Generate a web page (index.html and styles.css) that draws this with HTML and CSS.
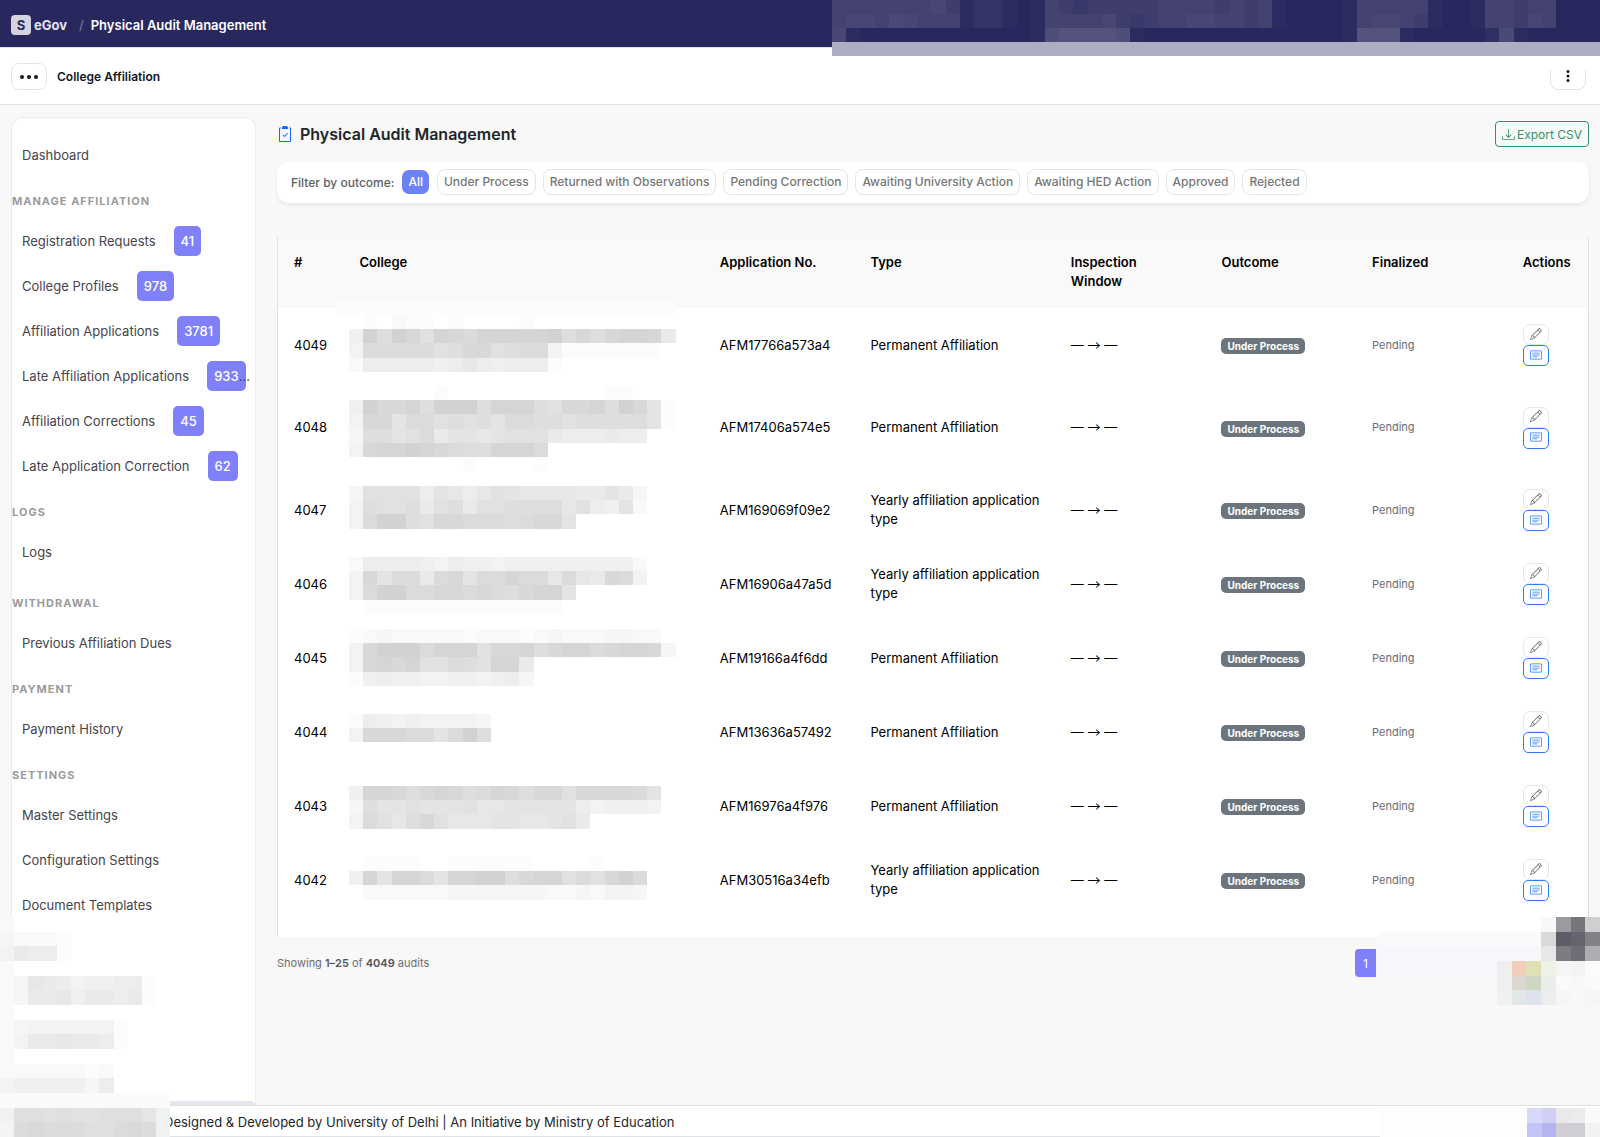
FILE: index.html
```html
<!DOCTYPE html>
<html lang="en">
<head>
    <meta charset="UTF-8">
    <meta name="viewport" content="width=device-width, initial-scale=1.0">
    <title>Physical Audit Management</title>
    <link rel="stylesheet" href="styles.css">
</head>
<body>

<!-- Shared icons -->
<svg class="icon-defs" aria-hidden="true">
    <symbol id="icon-pencil" viewBox="0 0 16 16">
        <path d="M12.146.146a.5.5 0 0 1 .708 0l3 3a.5.5 0 0 1 0 .708l-10 10a.5.5 0 0 1-.168.11l-5 2a.5.5 0 0 1-.65-.65l2-5a.5.5 0 0 1 .11-.168zM11.207 2.5 13.5 4.793 14.793 3.5 12.5 1.207zm1.586 3L10.5 3.207 4 9.707V10h.5a.5.5 0 0 1 .5.5v.5h.5a.5.5 0 0 1 .5.5v.5h.293zm-9.761 5.175-.106.106-1.528 3.821 3.821-1.528.106-.106A.5.5 0 0 1 5 12.5V12h-.5a.5.5 0 0 1-.5-.5V11h-.5a.5.5 0 0 1-.468-.325"/>
    </symbol>
    <symbol id="icon-card" viewBox="0 0 16 16">
        <path d="M14.500 3a.5.5 0 0 1 .5.5v9a.5.5 0 0 1-.5.5h-13a.5.5 0 0 1-.5-.5v-9a.5.5 0 0 1 .5-.5zm-13-1A1.500 1.500 0 0 0 0 3.500v9A1.500 1.500 0 0 0 1.500 14h13a1.500 1.500 0 0 0 1.500-1.500v-9A1.500 1.500 0 0 0 14.500 2z"/>
        <path d="M3 5.500a.5.5 0 0 1 .5-.5h9a.5.5 0 0 1 0 1h-9a.5.5 0 0 1-.5-.5M3 8a.5.5 0 0 1 .5-.5h9a.5.5 0 0 1 0 1h-9A.5.5 0 0 1 3 8m0 2.500a.5.5 0 0 1 .5-.5h6a.5.5 0 0 1 0 1h-6a.5.5 0 0 1-.5-.5"/>
    </symbol>
</svg>

<!-- Top bar -->
<header class="topbar">
    <span class="brand-mark">S</span>
    <a href="#" class="brand">eGov</a>
    <span class="slash">/</span>
    <span class="topbar-title">Physical Audit Management</span>
    <div class="topbar-mask">
        <svg class="mosaic" data-ink="#fff" data-step="0.02" data-rows="666666675133101654555556666565610000166666100166566000|677687666133101666675456677665610000167765100166576000|7100000000000019aaaa91000000000000001aaa100000281 00000"></svg>
    </div>
</header>

<div class="subbar">
    <button class="menu-button" aria-label="Menu">
        <svg width="18" height="4" viewBox="0 0 18 4"><circle cx="2" cy="2" r="2"/><circle cx="9" cy="2" r="2"/><circle cx="16" cy="2" r="2"/></svg>
    </button>
    <span class="subbar-title">College Affiliation</span>
    <button class="more-button" aria-label="More">
        <svg width="4" height="12" viewBox="0 0 4 12"><circle cx="2" cy="1.500" r="1.500"/><circle cx="2" cy="6" r="1.500"/><circle cx="2" cy="10.500" r="1.500"/></svg>
    </button>
</div>

<div class="layout">
    <!-- Sidebar Navigation -->
    <nav class="sidebar">
        <a href="#">Dashboard</a>
        <h2>Manage Affiliation</h2>
        <a href="#">Registration Requests <span class="count">41</span></a>
        <a href="#">College Profiles <span class="count">978</span></a>
        <a href="#">Affiliation Applications <span class="count">3781</span></a>
        <a href="#">Late Affiliation Applications <span class="count">933</span><span class="cut">...</span></a>
        <a href="#">Affiliation Corrections <span class="count">45</span></a>
        <a href="#">Late Application Correction <span class="count">62</span></a>
        <h2>Logs</h2>
        <a href="#" class="last">Logs</a>
        <h2>Withdrawal</h2>
        <a href="#">Previous Affiliation Dues</a>
        <h2>Payment</h2>
        <a href="#">Payment History</a>
        <h2>Settings</h2>
        <a href="#">Master Settings</a>
        <a href="#">Configuration Settings</a>
        <a href="#">Document Templates</a>
        <div class="sidebar-end"></div>
    </nav>

    <!-- Content Section -->
    <main class="content">
        <div class="page-head">
            <svg class="page-icon" width="16" height="16" viewBox="0 0 16 16">
                <path fill-rule="evenodd" d="M10.854 7.146a.5.5 0 0 1 0 .708l-3 3a.5.5 0 0 1-.708 0l-1.500-1.500a.5.5 0 1 1 .708-.708L7.500 9.793l2.646-2.647a.5.5 0 0 1 .708 0"/>
                <path d="M4 1.500H3a1 1 0 0 0-1 1V15a1 1 0 0 0 1 1h10a1 1 0 0 0 1-1V2.500a1 1 0 0 0-1-1h-1v1h1V15H3V2.500h1z"/>
                <path d="M6.500 0A1.500 1.500 0 0 0 5 1.500V3h6V1.500A1.500 1.500 0 0 0 9.500 0z"/>
            </svg>
            <h1>Physical Audit Management</h1>
            <button class="export-button">
                <svg width="13" height="13" viewBox="0 0 16 16">
                    <path d="M.5 9.900a.5.5 0 0 1 .5.5v2.500a1 1 0 0 0 1 1h12a1 1 0 0 0 1-1v-2.500a.5.5 0 0 1 1 0v2.500a2 2 0 0 1-2 2H2a2 2 0 0 1-2-2v-2.500a.5.5 0 0 1 .5-.5"/>
                    <path d="M7.646 11.854a.5.5 0 0 0 .708 0l3-3a.5.5 0 0 0-.708-.708L8.500 10.293V1.500a.5.5 0 0 0-1 0v8.793L5.354 8.146a.5.5 0 1 0-.708.708z"/>
                </svg>
                Export CSV
            </button>
        </div>

        <div class="filter-bar">
            <span class="filter-label">Filter by outcome:</span>
            <button class="active">All</button>
            <button>Under Process</button>
            <button>Returned with Observations</button>
            <button>Pending Correction</button>
            <button>Awaiting University Action</button>
            <button>Awaiting HED Action</button>
            <button>Approved</button>
            <button>Rejected</button>
        </div>

        <div class="table-wrap">
            <table>
                <thead>
                    <tr>
                        <th class="col-id">#</th>
                        <th class="col-college">College</th>
                        <th class="col-short">Application No.</th>
                        <th class="col-type">Type</th>
                        <th class="col-short">Inspection Window</th>
                        <th class="col-short">Outcome</th>
                        <th class="col-short">Finalized</th>
                        <th>Actions</th>
                    </tr>
                </thead>
                <tbody>
                    <tr>
                        <td>4049</td>
                        <td class="college"><div class="head-mask"></div><svg class="mosaic" data-top="7" data-rows="01021101000010000000000|5fbfdaedceeeeefbdbdeed7|4cccccabddabcc411111110|26666656865666100000000"></svg></td>
                        <td>AFM17766a573a4</td>
                        <td>Permanent Affiliation</td>
                        <td class="window">— <span class="arrow">→</span> —</td>
                        <td><span class="status">Under Process</span></td>
                        <td class="muted">Pending</td>
                        <td class="actions"></td>
                    </tr>
                    <tr class="tall">
                        <td>4048</td>
                        <td class="college"><svg class="mosaic" data-top="4" data-rows="0000001000000000001100|5fddebfffbeeebaddebfd91|4dd9ccabab9ccbbabbbbb91|3bb9ac79989aaa76667660|4deefedcbbeeec0|000000001000010"></svg></td>
                        <td>AFM17406a574e5</td>
                        <td>Permanent Affiliation</td>
                        <td class="window">— <span class="arrow">→</span> —</td>
                        <td><span class="status">Under Process</span></td>
                        <td class="muted">Pending</td>
                        <td class="actions"></td>
                    </tr>
                    <tr>
                        <td>4047</td>
                        <td class="college"><svg class="mosaic" data-top="13" data-rows="3aaaa69868a9888877973|4baab7ab7aabbbb8a6592|4cffbaddcccbcdd90"></svg></td>
                        <td>AFM169069f09e2</td>
                        <td>Yearly affiliation application type</td>
                        <td class="window">— <span class="arrow">→</span> —</td>
                        <td><span class="status">Under Process</span></td>
                        <td class="muted">Pending</td>
                        <td class="actions"></td>
                    </tr>
                    <tr>
                        <td>4046</td>
                        <td class="college"><svg class="mosaic" data-top="10" data-rows="266665465545555555552|4d9cc7cd9ccecc8c87dc4|4cffccddcdcbdee90|011111111111111"></svg></td>
                        <td>AFM16906a47a5d</td>
                        <td>Yearly affiliation application type</td>
                        <td class="window">— <span class="arrow">→</span> —</td>
                        <td><span class="status">Under Process</span></td>
                        <td class="muted">Pending</td>
                        <td class="actions"></td>
                    </tr>
                    <tr>
                        <td>4045</td>
                        <td class="college"><svg class="mosaic" data-top="8" data-rows="12322222122212322233220|4dfffceeeaddebdeecdeed3|4dedeaacbaee7|1565544554563"></svg></td>
                        <td>AFM19166a4f6dd</td>
                        <td>Permanent Affiliation</td>
                        <td class="window">— <span class="arrow">→</span> —</td>
                        <td><span class="status">Under Process</span></td>
                        <td class="muted">Pending</td>
                        <td class="actions"></td>
                    </tr>
                    <tr>
                        <td>4044</td>
                        <td class="college"><svg class="mosaic" data-top="19" data-rows="1654544443|4dddcc9cfb"></svg></td>
                        <td>AFM13636a57492</td>
                        <td>Permanent Affiliation</td>
                        <td class="window">— <span class="arrow">→</span> —</td>
                        <td><span class="status">Under Process</span></td>
                        <td class="muted">Pending</td>
                        <td class="actions"></td>
                    </tr>
                    <tr>
                        <td>4043</td>
                        <td class="college"><svg class="mosaic" data-top="17" data-rows="5eedbdedbcedbddaddddc9|3b99a999a8899999645554|4ca8bda88899889a7"></svg></td>
                        <td>AFM16976a4f976</td>
                        <td>Permanent Affiliation</td>
                        <td class="window">— <span class="arrow">→</span> —</td>
                        <td><span class="status">Under Process</span></td>
                        <td class="muted">Pending</td>
                        <td class="actions"></td>
                    </tr>
                    <tr>
                        <td>4042</td>
                        <td class="college"><svg class="mosaic" data-top="14" data-rows="011110011111100001000|5e9eec9eeffbdeeacadfc0|022222233333332232443"></svg></td>
                        <td>AFM30516a34efb</td>
                        <td>Yearly affiliation application type</td>
                        <td class="window">— <span class="arrow">→</span> —</td>
                        <td><span class="status">Under Process</span></td>
                        <td class="muted">Pending</td>
                        <td class="actions"></td>
                    </tr>
                </tbody>
            </table>
        </div>

        <div class="table-foot">
            <span>Showing <b>1–25</b> of <b>4049</b> audits</span>
            <button class="page-number">1</button>
        </div>
    </main>
</div>

<footer class="footer">
    <span>Designed &amp; Developed by <a href="#">University of Delhi</a> | An Initiative by <a href="#">Ministry of Education</a></span>
</footer>

<!-- Masked areas at the bottom corners -->
<div class="mask-left">
    <svg class="mosaic" data-cell-height="14.670" data-rows="2|32221|47661|2|238764556610|237785776710|2|234444441|247787761|2|22222212|45555536"></svg>
</div>
<div class="mask-footer">
    <svg class="mosaic" data-cell-height="14.670" data-rows="111111111111|4aa9a99aaa84|3bcbbbaabcb4"></svg>
</div>
<div class="mask-pages"></div>
<div class="mask-chat">
    <svg class="mosaic" data-cell-width="14.720" data-cell-height="14.670" data-colors="- - - #f8f8f8 #9b9aa0 #75767a #cfcfd0|- - #fafafa #d9d9da #5d5d67 #65656f #818286|- - - #e7e7e8 #7c7d80 #6e6e79 #aeadb2|#f0eff0 #f0ceb9 #dfe0b3 #edf1e6 #f5f5f5 #f3f3f3 #fafbfa|#efeff0 #dcd7d0 #cdd6c1 #ebede8 #fafafa #f8f8f8 #fafafa|#f0f0f0 #e1e6e8 #dee2ea #ededed #f6f6f6 #f8f8f8 #f6f6f6"></svg>
</div>
<div class="mask-tools">
    <svg class="mosaic" data-cell-width="14.600" data-cell-height="14.670" data-colors="#d8d8fa #d0cff6 #e9e8ea #ebebed #fafafa|#c4c3f7 #b6b4ef #cfced2 #cfcfd2 #f1f2f2"></svg>
</div>

<script>
    var CELL = 14.2;

    // Fills each mosaic with tiles: hex digits give the strength, data-colors gives full colours
    document.querySelectorAll('.mosaic').forEach(function(svg) {
        var data = svg.dataset;
        var top = Number(data.top || 0);
        var cellWidth = Number(data.cellWidth || CELL);
        var cellHeight = Number(data.cellHeight || CELL);
        var lines = (data.colors || data.rows).split('|');
        var out = '';

        lines.forEach(function(line, r) {
            var cells = data.colors ? line.split(' ') : line.replace(/ /g, '').split('');
            cells.forEach(function(cell, c) {
                if (cell === '-' || cell === '0') return;
                var fill = data.colors ? cell : (data.ink || '#000');
                var opacity = data.colors ? 1 : parseInt(cell, 16) * (data.step || 0.0118);
                var x = Math.round(c * cellWidth);
                var y = Math.round(top + r * cellHeight);
                var w = Math.round((c + 1) * cellWidth) - x;
                var h = Math.round(top + (r + 1) * cellHeight) - y;
                out += '<rect x="' + x + '" y="' + y + '" width="' + w + '" height="' + h + '" fill="' + fill + '" fill-opacity="' + opacity + '"/>';
            });
        });
        svg.innerHTML = out;
    });

    // Same two buttons on every row
    document.querySelectorAll('.actions').forEach(function(cell) {
        cell.innerHTML =
            '<button class="edit" aria-label="Edit"><svg width="12" height="12"><use href="#icon-pencil"/></svg></button>' +
            '<button class="view" aria-label="View"><svg width="12" height="12"><use href="#icon-card"/></svg></button>';
    });
</script>

</body>
</html>
```
FILE: styles.css
```css
* {
    box-sizing: border-box;
}

body {
    font-family: Inter, "Liberation Sans", sans-serif;
    font-size: 13px;
    line-height: 19px;
    margin: 0;
    min-height: 100vh;
    display: flex;
    flex-direction: column;
    position: relative;
    overflow-x: hidden;
    background-color: #f8f8f8;
    color: #000;
}

a {
    color: inherit;
    text-decoration: none;
}

button {
    font-family: inherit;
    cursor: pointer;
    background-color: #fff;
}

svg {
    fill: currentColor;
}

.icon-defs {
    position: absolute;
    width: 0;
    height: 0;
}

/* Top bar */
.topbar {
    height: 48px;
    display: flex;
    align-items: center;
    padding: 3px 11px 0;
    background-color: #29285e;
    border-bottom: 1px solid #e4e4ee;
    color: #fff;
    font-weight: 600;
    position: relative;
}

.brand-mark {
    width: 20px;
    height: 20px;
    border-radius: 4px;
    background-color: #d4d3df;
    color: #29285e;
    font-size: 13px;
    font-weight: 700;
    line-height: 20px;
    text-align: center;
    margin-right: 3px;
}

.brand {
    color: #e4e4ec;
    font-weight: 700;
}

.slash {
    color: #7f7e9e;
    font-weight: 400;
    margin: 0 7px 0 12px;
}

.topbar-mask {
    position: absolute;
    top: 0;
    right: 0;
    width: 768px;
    max-width: 48%;
    height: 56px;
    overflow: hidden;
    background-color: #29285e;
    border-bottom: 14px solid #aeaec2;
}

.mosaic {
    display: block;
    width: 100%;
    height: 100%;
    shape-rendering: crispEdges;
}

/* Second bar */
.subbar {
    display: flex;
    align-items: center;
    height: 57px;
    padding: 1px 14px 0 11px;
    background-color: #fff;
    border-bottom: 1px solid #dee2e6;
    color: #212529;
}

.subbar-title {
    margin-left: 10px;
    font-size: 12px;
    font-weight: 600;
    color: #111827;
}

.menu-button,
.more-button {
    display: flex;
    align-items: center;
    justify-content: center;
    width: 36px;
    height: 27px;
    border: 1px solid #e3e4e6;
    border-radius: 8px;
    padding: 0;
    color: #16181d;
}

.more-button {
    height: 20px;
    margin: 6px 0 0 auto;
    border-top: none;
    border-radius: 0 0 8px 8px;
    align-items: flex-start;
}

.layout {
    flex: 1;
    display: flex;
}

/* Sidebar */
.sidebar {
    width: 245px;
    margin: 12px 21px 0 11px;
    padding-top: 15px;
    flex-shrink: 0;
    display: flex;
    flex-direction: column;
    background-color: #fff;
    border: 1px solid #ececee;
    border-bottom: none;
    border-radius: 12px 12px 0 0;
}

.sidebar a {
    display: flex;
    align-items: center;
    height: 45px;
    padding-left: 10px;
    color: #45454d;
    white-space: nowrap;
}

.sidebar .last {
    margin-bottom: 5px;
}

.sidebar h2 {
    margin: 0;
    height: 41px;
    padding-top: 14px;
    font-size: 11px;
    font-weight: 700;
    letter-spacing: 1px;
    text-transform: uppercase;
    color: #9b9b9b;
}

.count {
    height: 30px;
    line-height: 30px;
    margin: 0 0 2px 18px;
    padding: 0 7px;
    border-radius: 5px;
    background-color: #8080fa;
    color: #fff;
    font-weight: 500;
}

.cut {
    margin-left: -7px;
}

.sidebar-end {
    height: 4px;
    margin-top: auto;
    background-color: #e7e6ec;
    border-radius: 0 8px 0 0;
}

/* Content section */
.content {
    flex: 1;
    min-width: 0;
    padding: 16px 11px 0 0;
}

.page-head {
    display: flex;
    align-items: center;
    height: 26px;
    margin-bottom: 15px;
}

.page-head h1 {
    margin: 0 auto 0 7px;
    font-size: 16px;
    font-weight: 600;
    color: #212529;
}

.page-icon {
    color: #0d6efd;
}

.export-button {
    display: flex;
    align-items: center;
    gap: 2px;
    height: 26px;
    padding: 0 6px;
    border: 1px solid #2f9467;
    border-radius: 4px;
    background-color: transparent;
    color: #2f9467;
    font-size: 12px;
}

.filter-bar {
    display: flex;
    align-items: center;
    gap: 7px;
    height: 41px;
    padding: 0 14px 1px;
    margin-bottom: 34px;
    background-color: #fff;
    border-radius: 12px;
    box-shadow: 0 2px 4px rgba(0, 0, 0, 0.07);
    white-space: nowrap;
    font-size: 12px;
}

.filter-label {
    font-weight: 500;
    color: #5c5f63;
}

.filter-bar button {
    height: 26px;
    padding: 0 6px 1px;
    border: 1px solid #e5e5e5;
    border-radius: 8px;
    color: #777;
    font-size: 12px;
    font-weight: 500;
}

.filter-bar .active {
    border-color: transparent;
    background-color: #6c82f8;
    background-clip: padding-box;
    color: #fff;
}

/* Table styling */
.table-wrap {
    background-color: #fff;
    border: 1px solid #dee2e6;
    border-width: 0 1px;
    padding-bottom: 20px;
}

table {
    width: 100%;
    table-layout: fixed;
    border-collapse: collapse;
}

th,
td {
    padding: 16px;
    text-align: left;
    vertical-align: middle;
}

th {
    height: 71px;
    background-color: #f9f9f9;
    vertical-align: top;
    font-weight: 600;
}

td {
    height: 74px;
    padding: 0 8px 0 16px;
}

.tall td {
    height: 91px;
}

.col-id {
    width: 5%;
}

.col-college {
    width: 27.5%;
}

.col-short {
    width: 11.5%;
}

.col-type {
    width: 15.3%;
}

td.college {
    padding: 0 5px;
    position: relative;
}

.college .mosaic {
    height: 74px;
}

.tall .mosaic {
    height: 91px;
}

.head-mask {
    position: absolute;
    top: -8px;
    left: -8px;
    width: 340px;
    height: 14px;
    background-color: #fcfcfc;
}

.window {
    white-space: nowrap;
}

.arrow {
    font-family: "Noto Sans CJK JP", sans-serif;
    line-height: 1;
}

.status {
    display: block;
    width: fit-content;
    height: 16px;
    line-height: 16px;
    margin-top: 2px;
    padding: 0 6px;
    border-radius: 5px;
    background-color: #6c757d;
    color: #fff;
    font-size: 10px;
    font-weight: 700;
    white-space: nowrap;
}

.muted {
    color: #6c6c72;
    font-size: 11px;
}

.actions button {
    display: flex;
    justify-content: center;
    align-items: center;
    width: 26px;
    height: 21px;
    padding: 0 0 2px;
    border: 1px solid #e5e5e5;
    border-radius: 7px;
    color: #777;
}

.actions .view {
    border-color: #2b7cf6;
    border-radius: 5px;
    color: #2b7cf6;
}

.table-foot {
    display: flex;
    justify-content: space-between;
    align-items: center;
    padding: 12px 213px 0 0;
    font-size: 11px;
    color: #6c6c72;
}

.table-foot b {
    font-weight: 600;
    color: #55555a;
}

.page-number {
    width: 21px;
    height: 28px;
    padding: 0;
    border: none;
    border-radius: 4px 0 0 4px;
    background-color: #8080fa;
    color: #fff;
    font-size: 12px;
}

/* Footer */
.footer {
    height: 32px;
    padding: 7px 0 0 164px;
    background-color: #fff;
    border: 1px solid #dee2e6;
    border-width: 1px 0;
    color: #212529;
}

/* Masks over the bottom of the page */
.mask-left,
.mask-footer,
.mask-pages,
.mask-chat,
.mask-tools {
    position: absolute;
    overflow: hidden;
}

.mask-left {
    left: 0;
    bottom: 44px;
    width: 170px;
    height: 176px;
    background-color: #fff;
}

.mask-footer {
    left: 0;
    bottom: 0;
    width: 170px;
    height: 44px;
    background-color: #fcfdfe;
}

.mask-pages {
    right: 0;
    bottom: 161px;
    width: 220px;
    height: 44px;
    background: linear-gradient(#fafafa 14px, #f7f7fb 14px);
}

.mask-chat {
    right: 0;
    bottom: 132px;
    width: 103px;
    height: 88px;
}

.mask-tools {
    right: 0;
    bottom: 0;
    width: 220px;
    height: 29px;
    padding-left: 147px;
    background-color: #fdfdfd;
}
```
